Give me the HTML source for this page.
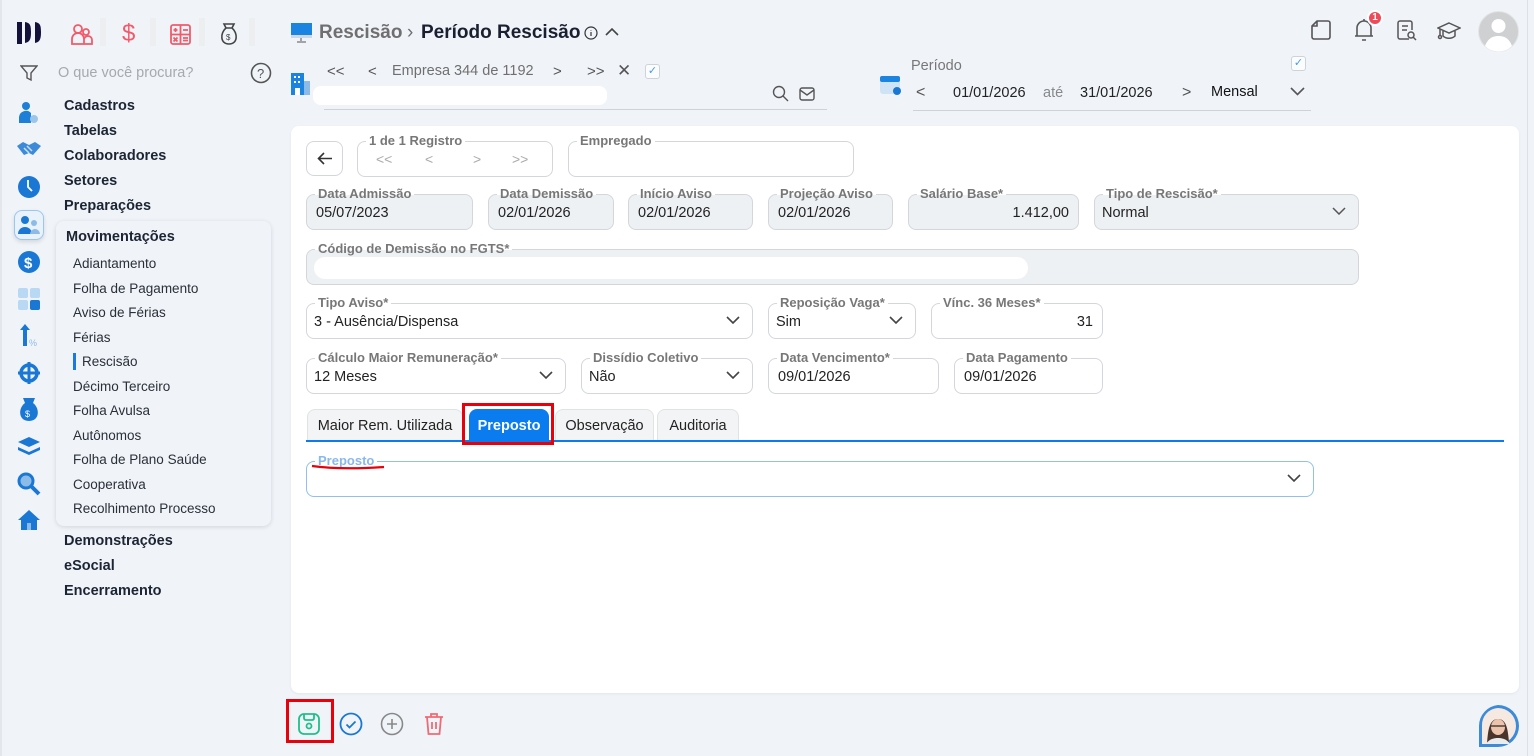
<!DOCTYPE html>
<html><head><meta charset="utf-8"><style>
*{box-sizing:border-box;margin:0;padding:0}
body{width:1534px;height:756px;overflow:hidden;background:#f0f4f9;font-family:"Liberation Sans",sans-serif;position:relative;color:#222}
.a{position:absolute}
.nav{position:absolute;left:64px;font-weight:bold;font-size:14.5px;color:#1c2533}
.sub{position:absolute;left:73px;font-size:13.5px;color:#2a2f38}
.f{position:absolute;border:1px solid #d3d7dc;border-radius:8px;background:#fff;height:36px;--bg:#fff}
.f.g{background:#eef1f4;--bg:#eef1f4}
.f label{position:absolute;left:8px;top:-9px;font-weight:bold;font-size:13px;color:#777;padding:0 3px;line-height:16px;background:linear-gradient(#fff 55%,var(--bg) 55%);white-space:nowrap}
.f .v{position:absolute;left:9px;top:10px;font-size:14.5px;color:#222}
.f .r{position:absolute;right:9px;top:10px;font-size:14.5px;color:#222}
.chev{position:absolute;right:12px;top:12px}
.tab{position:absolute;top:409px;height:33px;border:1px solid #e0e3e6;border-bottom:none;border-radius:8px 8px 0 0;background:#f3f4f5;font-size:14.5px;color:#222;padding-top:8px;text-align:center}
</style></head><body>
<div class="a" style="left:0;top:0;width:2px;height:756px;background:#e3e7ec"></div>
<div class="a" style="left:1527px;top:0;width:1px;height:756px;background:#dde1e6"></div>
<!-- logo -->
<svg class="a" style="left:16px;top:20px" width="28" height="26"><path d="M1 2h5v22H1zM9 2c5 1 6 3 6 10s-1 10-6 11zM19 2c5 1 6 3 6 10s-1 10-6 11z" fill="#14123a"/></svg>
<!-- top icons -->
<div class="a" style="left:100px;top:18px;width:6px;height:28px;background:#eceef0"></div>
<div class="a" style="left:150px;top:18px;width:6px;height:28px;background:#eceef0"></div>
<div class="a" style="left:199px;top:18px;width:6px;height:28px;background:#eceef0"></div>
<div class="a" style="left:249px;top:18px;width:6px;height:28px;background:#eceef0"></div>
<svg class="a" style="left:71px;top:23px" width="22" height="22" fill="none" stroke="#f25a6a" stroke-width="1.8"><circle cx="7" cy="6" r="4"/><circle cx="15" cy="9" r="3"/><path d="M1 21v-5a6 6 0 0 1 12 0v5zM13 21v-4a4 4 0 0 1 8 0v4z"/></svg>
<div class="a" style="left:122px;top:20px;font-size:24px;color:#f25a6a">$</div>
<svg class="a" style="left:170px;top:24px" width="21" height="21" fill="none" stroke="#f25a6a" stroke-width="1.8"><rect x="1" y="1" width="19" height="19" rx="2"/><path d="M10.5 1v19M1 10.5h19M3.5 6h4M5.5 4v4M13 6h5M13 14h5M13 16.5h5M3.5 13.5l4 4M7.5 13.5l-4 4"/></svg>
<svg class="a" style="left:220px;top:23px" width="18" height="22" fill="none" stroke="#444" stroke-width="1.6"><path d="M6 5 4 1h10l-2 4M6 5h6M6 5C0 10 0 21 9 21s9-11 3-16"/><text x="6" y="17" font-size="8" fill="#444" stroke="none" font-family="Liberation Sans">$</text></svg>
<!-- search -->
<svg class="a" style="left:20px;top:64px" width="18" height="18" fill="none" stroke="#555" stroke-width="1.4"><path d="M1 2h16l-6 7v7l-4-2V9z"/></svg>
<div class="a" style="left:58px;top:65px;font-size:14.5px;color:#a6a9ad">O que você procura?</div>
<svg class="a" style="left:250px;top:62px" width="22" height="22" fill="none" stroke="#555" stroke-width="1.6"><circle cx="11" cy="11" r="9.5"/><text x="7" y="16" font-size="13" fill="#555" stroke="none" font-family="Liberation Sans">?</text></svg>
<!-- side icons -->
<svg class="a" style="left:17px;top:101px" width="24" height="24"><circle cx="9" cy="5" r="4" fill="#1d7fd8"/><path d="M2 22v-6a7 7 0 0 1 12-4v10z" fill="#1d7fd8"/><circle cx="17" cy="18" r="4" fill="#9cc5ea"/></svg>
<svg class="a" style="left:16px;top:140px" width="26" height="20"><path d="M1 6l6-4 6 3 6-3 6 4-8 9-4-2-5 2z" fill="#3d8ad8"/><path d="M8 8l5 5M11 6l5 5" stroke="#c8dff4" stroke-width="1.5"/></svg>
<svg class="a" style="left:17px;top:175px" width="24" height="24"><circle cx="12" cy="12" r="11" fill="#1a78d4"/><path d="M11 5v7l4 4" stroke="#fff" stroke-width="1.8" fill="none"/></svg>
<div class="a" style="left:14px;top:210px;width:30px;height:30px;border-radius:8px;border:1px solid #9ac7ef;background:#e9f2fb;box-shadow:0 2px 4px rgba(0,0,0,.12)"></div>
<svg class="a" style="left:17px;top:214px" width="24" height="22"><circle cx="8" cy="6" r="4" fill="#1a78d4"/><path d="M1 20a7 7 0 0 1 14 0z" fill="#1a78d4"/><circle cx="17" cy="9" r="3" fill="#8dbbe8"/><path d="M13 20a5 5 0 0 1 10 0z" fill="#8dbbe8"/></svg>
<svg class="a" style="left:17px;top:250px" width="24" height="24"><circle cx="12" cy="12" r="11" fill="#1a78d4"/><text x="7" y="18" font-size="15" fill="#fff" font-family="Liberation Sans" font-weight="bold">$</text></svg>
<svg class="a" style="left:18px;top:288px" width="22" height="22"><rect x="0" y="0" width="10" height="10" rx="2" fill="#b9d8f3"/><rect x="12" y="0" width="10" height="10" rx="2" fill="#b9d8f3"/><rect x="0" y="12" width="10" height="10" rx="2" fill="#b9d8f3"/><rect x="12" y="12" width="10" height="10" rx="2" fill="#1a78d4"/></svg>
<svg class="a" style="left:19px;top:324px" width="20" height="24"><path d="M6 0l5 6H8v16H4V6H1z" fill="#1a78d4"/><text x="10" y="22" font-size="9" fill="#8dbbe8" font-family="Liberation Sans">%</text></svg>
<svg class="a" style="left:17px;top:361px" width="24" height="24"><circle cx="12" cy="12" r="8" fill="none" stroke="#1a78d4" stroke-width="3.5"/><path d="M12 1v22M1 12h22" stroke="#1a78d4" stroke-width="3"/></svg>
<svg class="a" style="left:19px;top:398px" width="20" height="24"><path d="M6 5 4 0h12l-2 5C21 10 21 23 10 23S-1 10 6 5z" fill="#1a78d4"/><text x="6" y="19" font-size="9" fill="#fff" font-family="Liberation Sans">$</text></svg>
<svg class="a" style="left:17px;top:436px" width="24" height="20"><path d="M12 1 23 6 12 11 1 6z" fill="#1a78d4"/><path d="M1 11l11 5 11-5v3l-11 5-11-5z" fill="#1a78d4"/></svg>
<svg class="a" style="left:17px;top:472px" width="24" height="24"><circle cx="9" cy="9" r="7" fill="#8dbbe8" stroke="#1a78d4" stroke-width="3"/><path d="M14 14l8 8" stroke="#1a78d4" stroke-width="4"/></svg>
<svg class="a" style="left:17px;top:509px" width="24" height="22"><path d="M12 1 23 11h-3v10H4V11H1z" fill="#1a78d4"/><rect x="10" y="14" width="4" height="7" fill="#8dbbe8"/></svg>
<!-- nav -->
<div class="nav" style="top:98px">Cadastros</div>
<div class="nav" style="top:123px">Tabelas</div>
<div class="nav" style="top:148px">Colaboradores</div>
<div class="nav" style="top:173px">Setores</div>
<div class="nav" style="top:198px">Preparações</div>
<div class="a" style="left:56px;top:221px;width:215px;height:305px;border-radius:8px;background:#f0f4f9;box-shadow:0 1px 5px rgba(0,0,0,.13)"></div>
<div class="nav" style="top:229px;left:66px">Movimentações</div>
<div class="sub" style="top:256px">Adiantamento</div>
<div class="sub" style="top:281px">Folha de Pagamento</div>
<div class="sub" style="top:305px">Aviso de Férias</div>
<div class="sub" style="top:330px">Férias</div>
<div class="a" style="left:73px;top:353px;width:3px;height:17px;background:#1a7ae0"></div>
<div class="sub" style="top:354px;left:82px">Rescisão</div>
<div class="sub" style="top:379px">Décimo Terceiro</div>
<div class="sub" style="top:403px">Folha Avulsa</div>
<div class="sub" style="top:428px">Autônomos</div>
<div class="sub" style="top:452px">Folha de Plano Saúde</div>
<div class="sub" style="top:477px">Cooperativa</div>
<div class="sub" style="top:501px">Recolhimento Processo</div>
<div class="nav" style="top:533px">Demonstrações</div>
<div class="nav" style="top:558px">eSocial</div>
<div class="nav" style="top:583px">Encerramento</div>
<!-- header -->
<svg class="a" style="left:291px;top:23px" width="22" height="20"><rect x="0" y="0" width="21" height="14" fill="#1a84e0"/><rect x="0" y="12" width="21" height="3" fill="#cfd8e2"/><path d="M10 15v3M6 19h9" stroke="#555"/></svg>
<div class="a" style="left:319px;top:22px;font-size:19px;font-weight:bold;color:#6f6f6f">Rescisão</div>
<div class="a" style="left:407px;top:22px;font-size:19px;color:#6f6f6f">›</div>
<div class="a" style="left:421px;top:22px;font-size:19px;font-weight:bold;color:#1a2030">Período Rescisão</div>
<svg class="a" style="left:584px;top:26px" width="14" height="14" fill="none" stroke="#333" stroke-width="1.2"><circle cx="7" cy="7" r="6"/><path d="M7 6v4M7 4v.5"/></svg>
<svg class="a" style="left:605px;top:28px" width="14" height="9" fill="none" stroke="#444" stroke-width="1.6"><path d="M1 7l6-6 6 6"/></svg>
<svg class="a" style="left:291px;top:73px" width="22" height="22"><rect x="0" y="0" width="13" height="22" fill="#1a84e0"/><rect x="13" y="8" width="6" height="14" fill="#8dbbe8"/><g fill="#fff"><rect x="3" y="3" width="2" height="2"/><rect x="7" y="3" width="2" height="2"/><rect x="3" y="8" width="2" height="2"/><rect x="7" y="8" width="2" height="2"/><rect x="4" y="15" width="5" height="7"/></g></svg>
<div class="a" style="left:327px;top:63px;font-size:15px;color:#555">&lt;&lt;</div>
<div class="a" style="left:368px;top:63px;font-size:15px;color:#555">&lt;</div>
<div class="a" style="left:392px;top:63px;font-size:14.5px;color:#6f6f6f">Empresa 344 de 1192</div>
<div class="a" style="left:553px;top:63px;font-size:15px;color:#555">&gt;</div>
<div class="a" style="left:587px;top:63px;font-size:15px;color:#555">&gt;&gt;</div>
<div class="a" style="left:617px;top:61px;font-size:17px;color:#555">✕</div>
<div class="a" style="left:645px;top:64px;width:15px;height:15px;border:1px solid #cfd3d8;border-radius:3px;color:#4a9be8;font-size:11px;text-align:center;line-height:13px;background:#fafcfe">✓</div>
<div class="a" style="left:313px;top:86px;width:294px;height:19px;border-radius:8px;background:#fff"></div>
<svg class="a" style="left:772px;top:85px" width="17" height="17" fill="none" stroke="#555" stroke-width="1.4"><circle cx="7" cy="7" r="5.5"/><path d="M11 11l5 5"/></svg>
<svg class="a" style="left:799px;top:87px" width="16" height="14" fill="none" stroke="#555" stroke-width="1.4"><rect x="1" y="1" width="14" height="12" rx="2"/><path d="M1 3l7 5 7-5"/></svg>
<div class="a" style="left:324px;top:109px;width:503px;height:1px;background:#cfd3d8"></div>
<!-- periodo -->
<svg class="a" style="left:880px;top:74px" width="22" height="22"><rect x="0" y="2" width="20" height="18" rx="3" fill="#cfe3f6"/><rect x="0" y="2" width="20" height="6" rx="2" fill="#1a84e0"/><circle cx="17" cy="17" r="4" fill="#1a78d4"/></svg>
<div class="a" style="left:911px;top:58px;font-size:14.5px;color:#777">Período</div>
<div class="a" style="left:916px;top:84px;font-size:16px;color:#555">&lt;</div>
<div class="a" style="left:953px;top:85px;font-size:14.5px;color:#222">01/01/2026</div>
<div class="a" style="left:1043px;top:85px;font-size:14.5px;color:#888">até</div>
<div class="a" style="left:1080px;top:85px;font-size:14.5px;color:#222">31/01/2026</div>
<div class="a" style="left:1182px;top:84px;font-size:16px;color:#555">&gt;</div>
<div class="a" style="left:1211px;top:84px;font-size:14.5px;color:#111">Mensal</div>
<svg class="a" style="left:1290px;top:87px" width="15" height="9" fill="none" stroke="#555" stroke-width="1.6"><path d="M1 1l6.5 6.5L14 1"/></svg>
<div class="a" style="left:1291px;top:56px;width:15px;height:15px;border:1px solid #cfd3d8;border-radius:3px;color:#4a9be8;font-size:11px;text-align:center;line-height:13px;background:#fafcfe">✓</div>
<div class="a" style="left:913px;top:110px;width:398px;height:1px;background:#cfd3d8"></div>
<!-- top right icons -->
<svg class="a" style="left:1310px;top:19px" width="22" height="22" fill="none" stroke="#555" stroke-width="1.6"><path d="M7 2h11a2 2 0 0 1 2 2v14a2 2 0 0 1-2 2H4a2 2 0 0 1-2-2V7z"/><path d="M2 7h5V2"/></svg>
<svg class="a" style="left:1353px;top:18px" width="22" height="24" fill="none" stroke="#555" stroke-width="1.6"><path d="M4 18V10a7 7 0 0 1 14 0v8zM2 18h18M9 22h4M11 1v2"/></svg>
<div class="a" style="left:1367px;top:10px;width:16px;height:16px;border-radius:50%;background:#ee4a57;border:2px solid #fff;color:#fff;font-size:10px;font-weight:bold;text-align:center;line-height:12px">1</div>
<svg class="a" style="left:1397px;top:20px" width="20" height="21" fill="none" stroke="#555" stroke-width="1.5"><path d="M12 19H3a2 2 0 0 1-2-2V3a2 2 0 0 1 2-2h10a2 2 0 0 1 2 2v7M5 6h6M5 10h5"/><circle cx="14" cy="15" r="3"/><path d="M16 17l3 3"/></svg>
<svg class="a" style="left:1437px;top:21px" width="24" height="20" fill="none" stroke="#555" stroke-width="1.5"><path d="M12 2 23 7 12 12 1 7zM6 10v5c3 3 9 3 12 0v-5M3 8v7"/><circle cx="3" cy="16" r="1.5"/></svg>
<svg class="a" style="left:1478px;top:11px" width="41" height="41"><circle cx="20.5" cy="20.5" r="20" fill="#cfd0d2" stroke="#e3e4e6"/><circle cx="20.5" cy="15" r="7" fill="#fff"/><path d="M7 35c3-8 8-10 13.5-10S31 27 34 35a19 19 0 0 1-27 0z" fill="#fff"/></svg>
<!-- main card -->
<div class="a" style="left:291px;top:126px;width:1228px;height:567px;background:#fff;border-radius:8px;box-shadow:0 1px 3px rgba(0,0,0,.06)"></div>
<div class="a" style="left:306px;top:141px;width:37px;height:35px;border:1px solid #d3d7dc;border-radius:8px"></div>
<svg class="a" style="left:317px;top:152px" width="16" height="13" fill="none" stroke="#333" stroke-width="1.6"><path d="M15 6.5H2M7 1 1.5 6.5 7 12"/></svg>
<div class="f" style="left:357px;top:141px;width:196px"><label>1 de 1 Registro</label>
<span class="a" style="left:18px;top:9px;color:#aaa;font-size:14px">&lt;&lt;</span><span class="a" style="left:67px;top:9px;color:#aaa;font-size:14px">&lt;</span><span class="a" style="left:115px;top:9px;color:#aaa;font-size:14px">&gt;</span><span class="a" style="left:154px;top:9px;color:#aaa;font-size:14px">&gt;&gt;</span></div>
<div class="f" style="left:568px;top:141px;width:286px"><label>Empregado</label></div>
<div class="f g" style="left:306px;top:194px;width:167px"><label>Data Admissão</label><span class="v">05/07/2023</span></div>
<div class="f g" style="left:488px;top:194px;width:126px"><label>Data Demissão</label><span class="v">02/01/2026</span></div>
<div class="f g" style="left:628px;top:194px;width:125px"><label>Início Aviso</label><span class="v">02/01/2026</span></div>
<div class="f g" style="left:768px;top:194px;width:125px"><label>Projeção Aviso</label><span class="v">02/01/2026</span></div>
<div class="f g" style="left:908px;top:194px;width:171px"><label>Salário Base*</label><span class="r">1.412,00</span></div>
<div class="f g" style="left:1094px;top:194px;width:265px"><label>Tipo de Rescisão*</label><span class="v" style="left:7px">Normal</span><svg class="chev" width="14" height="8" fill="none" stroke="#555" stroke-width="1.5"><path d="M1 1l6 6 6-6"/></svg></div>
<div class="f g" style="left:306px;top:249px;width:1053px"><label>Código de Demissão no FGTS*</label><div class="a" style="left:7px;top:7px;width:714px;height:22px;border-radius:11px;background:#fff"></div></div>
<div class="f" style="left:306px;top:303px;width:447px"><label>Tipo Aviso*</label><span class="v" style="left:7px">3 - Ausência/Dispensa</span><svg class="chev" width="14" height="8" fill="none" stroke="#444" stroke-width="1.6"><path d="M1 1l6 6 6-6"/></svg></div>
<div class="f" style="left:768px;top:303px;width:148px"><label>Reposição Vaga*</label><span class="v" style="left:7px">Sim</span><svg class="chev" width="14" height="8" fill="none" stroke="#444" stroke-width="1.6"><path d="M1 1l6 6 6-6"/></svg></div>
<div class="f" style="left:931px;top:303px;width:172px"><label>Vínc. 36 Meses*</label><span class="r">31</span></div>
<div class="f" style="left:306px;top:358px;width:260px"><label>Cálculo Maior Remuneração*</label><span class="v" style="left:7px">12 Meses</span><svg class="chev" width="14" height="8" fill="none" stroke="#444" stroke-width="1.6"><path d="M1 1l6 6 6-6"/></svg></div>
<div class="f" style="left:581px;top:358px;width:172px"><label>Dissídio Coletivo</label><span class="v" style="left:7px">Não</span><svg class="chev" width="14" height="8" fill="none" stroke="#444" stroke-width="1.6"><path d="M1 1l6 6 6-6"/></svg></div>
<div class="f" style="left:768px;top:358px;width:171px"><label>Data Vencimento*</label><span class="v">09/01/2026</span></div>
<div class="f" style="left:954px;top:358px;width:149px"><label>Data Pagamento</label><span class="v">09/01/2026</span></div>
<!-- tabs -->
<div class="tab" style="left:307px;width:156px">Maior Rem. Utilizada</div>
<div class="tab" style="left:469px;width:80px;background:#0a7cf0;border-color:#0a7cf0;color:#fff;font-weight:bold">Preposto</div>
<div class="tab" style="left:555px;width:99px">Observação</div>
<div class="tab" style="left:657px;width:82px">Auditoria</div>
<div class="a" style="left:306px;top:440px;width:1198px;height:2px;background:#0a7cf0"></div>
<div class="a" style="left:462px;top:403px;width:92px;height:42px;border:3px solid #e8000b"></div>
<div class="f" style="left:306px;top:461px;width:1008px;border-color:#8fc0ef"><label style="color:#8ab8ea">Preposto</label><svg class="chev" width="14" height="8" fill="none" stroke="#444" stroke-width="1.6"><path d="M1 1l6 6 6-6"/></svg></div>
<svg class="a" style="left:311px;top:462px" width="74" height="8"><path d="M1 4q30 4 72 1" stroke="#e8000b" stroke-width="2.2" fill="none"/></svg>
<!-- bottom -->
<div class="a" style="left:286px;top:699px;width:48px;height:44px;border:3px solid #e8000b"></div>
<svg class="a" style="left:298px;top:713px" width="22" height="22" fill="none" stroke="#1fbf8a" stroke-width="1.8"><rect x="1" y="1" width="20" height="20" rx="5"/><path d="M6 1v4q0 2 2 2h6q2 0 2-2V1"/><circle cx="11" cy="13" r="2.5"/></svg>
<svg class="a" style="left:339px;top:712px" width="24" height="24" fill="none" stroke="#1a78d4" stroke-width="1.8"><circle cx="12" cy="12" r="10.5"/><path d="M7.5 12.5l3 3 6-6"/></svg>
<svg class="a" style="left:380px;top:712px" width="24" height="24" fill="none" stroke="#888" stroke-width="1.6"><circle cx="12" cy="12" r="10.5"/><path d="M12 7v10M7 12h10"/></svg>
<svg class="a" style="left:424px;top:712px" width="20" height="24" fill="none" stroke="#f06a74" stroke-width="1.8"><path d="M1 5h18M7 5V2h6v3M3 5l1.5 17h11L17 5M8 10v7M12 10v7"/></svg>
<svg class="a" style="left:1476px;top:703px" width="45" height="46"><path d="M22 2a21 21 0 1 1 0 42H3V23A21 21 0 0 1 22 2z" fill="#3d8ad8"/><path d="M22 5a18 18 0 1 1 0 36H6V23A17 17 0 0 1 22 5z" fill="#f6e9e2"/><path d="M11 40c1-12 2-24 11-24s10 12 11 24z" fill="#4a342c"/><ellipse cx="22" cy="24" rx="7" ry="8" fill="#eec3ab"/><path d="M10 41c3-5 8-6 12-6s9 1 12 6z" fill="#e9ecef"/><path d="M15 23h14" stroke="#222" stroke-width="1.2"/></svg>
</body></html>
